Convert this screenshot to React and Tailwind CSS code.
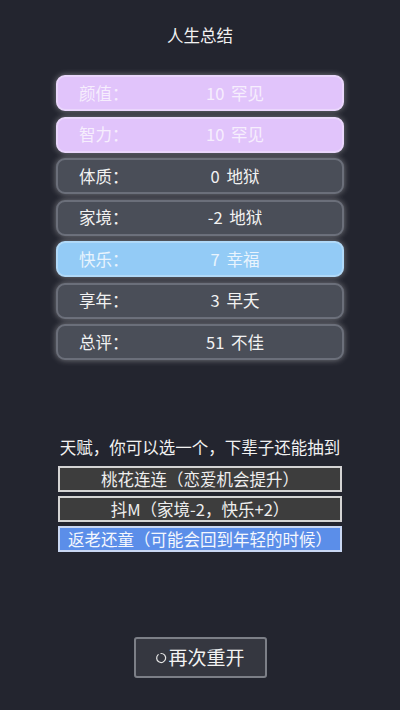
import React from "react";

const rows = [
  { label: "颜值：", num: "10", word: "罕见", type: "purple" },
  { label: "智力：", num: "10", word: "罕见", type: "purple" },
  { label: "体质：", num: "0", word: "地狱", type: "dark" },
  { label: "家境：", num: "-2", word: "地狱", type: "dark" },
  { label: "快乐：", num: "7", word: "幸福", type: "blue" },
  { label: "享年：", num: "3", word: "早夭", type: "dark" },
  { label: "总评：", num: "51", word: "不佳", type: "dark" },
];

const rowStyles = {
  purple: "bg-[#e1c4fb] border-[#ead6fc] text-[#f6eefd]",
  blue: "bg-[#93cbf6] border-[#b0d9f8] text-[#e9f4fd]",
  dark: "bg-[#4a4e58] border-[#6b6f7a] text-[#f2f2f2]",
};

const talents = [
  { text: "桃花连连（恋爱机会提升）", sel: false },
  { text: "抖M（家境-2，快乐+2）", sel: false },
  { text: "返老还童（可能会回到年轻的时候）", sel: true },
];

export default function App() {
  return (
    <div
      className="w-[400px] h-[710px] bg-[#23252f] flex flex-col items-center text-white"
      style={{ fontFamily: '"Noto Sans CJK SC", "Noto Sans", sans-serif' }}
    >
      <div className="mt-[23px] h-[24px] leading-[24px] text-[16.5px] text-[#f2f2f2]">人生总结</div>

      <div className="mt-[28px] w-[288px] flex flex-col gap-[5.5px]">
        {rows.map((r, i) => (
          <div
            key={i}
            className={`h-[36px] rounded-[9px] border-2 flex items-center px-[21px] text-[16.5px] shadow-[0_0_6px_rgba(255,255,255,0.4)] ${rowStyles[r.type]}`}
          >
            <span className="w-[70px]">{r.label}</span>
            <span className="flex-1 text-center whitespace-nowrap">
              {r.num} <span className="ml-[3px]">{r.word}</span>
            </span>
          </div>
        ))}
      </div>

      <div className="mt-[75px] h-[24px] leading-[24px] text-[16.5px] text-[#f2f2f2] whitespace-nowrap">
        天赋，你可以选一个，下辈子还能抽到
      </div>

      <div className="mt-[7px] w-[284px] flex flex-col gap-[4px]">
        {talents.map((t, i) => (
          <div
            key={i}
            className={`h-[26px] border-2 flex items-center justify-center text-[16.5px] whitespace-nowrap leading-none ${
              t.sel
                ? "bg-[#5b8ee9] border-[#c9d7f3] text-[#f4f7fd]"
                : "bg-[#3d3d3d] border-[#d4d4d4] text-[#eeeeee]"
            }`}
          >
            {t.text}
          </div>
        ))}
      </div>

      <button className="mt-[85px] w-[133px] h-[41px] border-2 border-[#7c7f87] bg-[#353740] rounded-[3px] flex items-center justify-center text-[19px] text-[#f2f2f2]">
        <svg width="12" height="12" viewBox="0 0 12 12" className="mr-[1px]">
          <path
            d="M3.2 2.6 A4.5 4.5 0 1 0 6 1.5"
            fill="none"
            stroke="#e5e5e5"
            strokeWidth="1.2"
            strokeLinecap="round"
          />
        </svg>
        <span>再次重开</span>
      </button>
    </div>
  );
}
